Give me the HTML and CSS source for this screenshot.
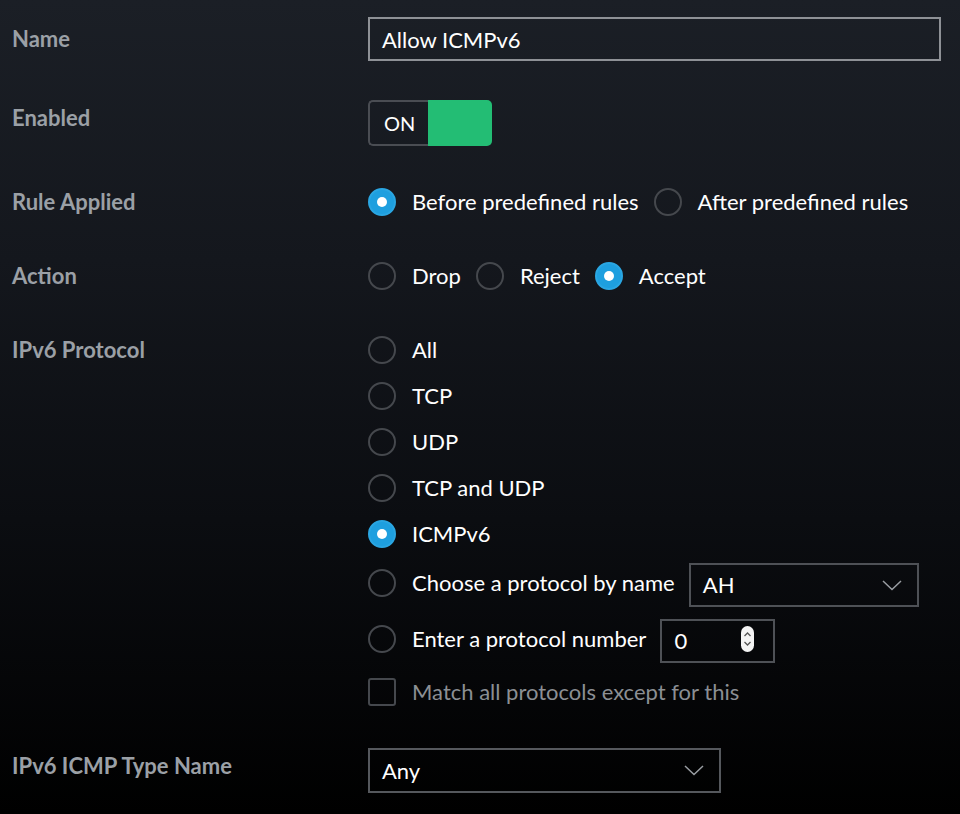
FILE: index.html
```html
<!DOCTYPE html>
<html lang="en">
<head>
<meta charset="utf-8">
<title>Firewall rule</title>
<link rel="stylesheet" href="styles.css">
</head>
<body>
<form class="form">
  <div class="row">
    <div class="label">Name</div>
    <div class="text-input name-input">Allow ICMPv6</div>
  </div>

  <div class="row row--top row--enabled">
    <div class="label label--enabled">Enabled</div>
    <div class="toggle">
      <span class="toggle-on">ON</span>
      <span class="toggle-knob"></span>
    </div>
  </div>

  <div class="row row--rule">
    <div class="label">Rule Applied</div>
    <div class="inline-options">
      <span class="opt"><span class="radio radio--checked"></span>Before predefined rules</span>
      <span class="opt"><span class="radio"></span>After predefined rules</span>
    </div>
  </div>

  <div class="row row--action">
    <div class="label">Action</div>
    <div class="inline-options">
      <span class="opt"><span class="radio"></span>Drop</span>
      <span class="opt"><span class="radio"></span>Reject</span>
      <span class="opt"><span class="radio radio--checked"></span>Accept</span>
    </div>
  </div>

  <div class="row row--top row--protocol">
    <div class="label label--stack">IPv6 Protocol</div>
    <div class="stack">
      <span class="opt"><span class="radio"></span>All</span>
      <span class="opt opt--s"><span class="radio"></span>TCP</span>
      <span class="opt opt--s"><span class="radio"></span>UDP</span>
      <span class="opt opt--s"><span class="radio"></span>TCP and UDP</span>
      <span class="opt opt--s"><span class="radio radio--checked"></span>ICMPv6</span>
      <div class="opt opt--choose">
        <span class="radio"></span><span class="opt-text">Choose a protocol by name</span>
        <div class="select select--proto">
          <span>AH</span>
          <svg class="chevron" width="20" height="11" viewBox="0 0 20 11"><polyline points="1,1 10,9.5 19,1" fill="none" stroke="#9a9ea3" stroke-width="1.5"/></svg>
        </div>
      </div>
      <div class="opt opt--number">
        <span class="radio"></span><span class="opt-text">Enter a protocol number</span>
        <div class="number-input">
          <span>0</span>
          <span class="spinner">
            <svg width="13" height="26" viewBox="0 0 13 26"><rect x="0" y="0" width="13" height="26" rx="6.5" fill="#f4f4f4"/><polyline points="3.5,10 6.5,7 9.5,10" fill="none" stroke="#555" stroke-width="1.3"/><polyline points="3.5,16 6.5,19 9.5,16" fill="none" stroke="#555" stroke-width="1.3"/></svg>
          </span>
        </div>
      </div>
      <div class="opt opt--check">
        <span class="checkbox"></span><span class="muted">Match all protocols except for this</span>
      </div>
    </div>
  </div>

  <div class="row row--top row--icmp">
    <div class="label label--icmp">IPv6 ICMP Type Name</div>
    <div class="select select--icmp">
      <span>Any</span>
      <svg class="chevron" width="20" height="11" viewBox="0 0 20 11"><polyline points="1,1 10,9.5 19,1" fill="none" stroke="#9a9ea3" stroke-width="1.5"/></svg>
    </div>
  </div>
</form>
</body>
</html>
```

FILE: styles.css
```css
html, body {
  margin: 0;
  padding: 0;
}

body {
  width: 960px;
  height: 814px;
  overflow: hidden;
  background: linear-gradient(180deg, #1b1f26 0px, #14171d 260px, #0b0d11 520px, #000000 814px);
  font-family: Lato, "Open Sans", sans-serif;
  font-size: 22px;
  color: #ffffff;
}

.form {
  display: flex;
  flex-direction: column;
  padding: 17px 0 0 12px;
}

.row {
  display: flex;
  align-items: center;
}

.row--top {
  align-items: flex-start;
}

.row--enabled { margin-top: 39px; }
.row--rule { margin-top: 42px; }
.row--action { margin-top: 46px; }
.row--protocol { margin-top: 46px; }
.row--icmp { margin-top: 42px; }

.label {
  width: 356px;
  flex: none;
  font-weight: 700;
  color: #9ba0a6;
  line-height: 28px;
}

.label--enabled { margin-top: 4px; }
.label--icmp { margin-top: 4px; }

.text-input {
  box-sizing: border-box;
  height: 44px;
  border: 2px solid #8e9196;
  display: flex;
  align-items: center;
  padding-left: 12px;
}

.name-input {
  width: 573px;
}

.toggle {
  display: flex;
  width: 124px;
  height: 46px;
}

.toggle-on {
  box-sizing: border-box;
  width: 60px;
  height: 46px;
  border: 2px solid #4a4d53;
  border-right: none;
  border-radius: 5px 0 0 5px;
  display: flex;
  align-items: center;
  padding-left: 14px;
  font-size: 20px;
}

.toggle-knob {
  flex: 1;
  background: #23bd74;
  border-radius: 0 5px 5px 0;
}

.inline-options {
  display: flex;
  align-items: center;
}

.opt {
  display: flex;
  align-items: center;
  gap: 16px;
  margin-right: 15px;
  line-height: 28px;
}

.radio {
  box-sizing: border-box;
  width: 28px;
  height: 28px;
  flex: none;
  border-radius: 50%;
  border: 2px solid #45484d;
  position: relative;
}

.radio--checked {
  background: #1e9fdf;
  border-color: #2aa6e2;
}

.radio--checked::after {
  content: "";
  position: absolute;
  left: 50%;
  top: 50%;
  width: 10px;
  height: 10px;
  margin: -5px 0 0 -5px;
  border-radius: 50%;
  background: #ffffff;
}

.stack {
  display: flex;
  flex-direction: column;
  align-items: flex-start;
}

.opt--s { margin-top: 18px; }

.opt--choose {
  margin-top: 15px;
  gap: 0;
}

.opt--number {
  margin-top: 12px;
  gap: 0;
}

.opt--choose .opt-text,
.opt--number .opt-text {
  margin: -4px 14px 0 16px;
}

.opt--choose .radio,
.opt--number .radio {
  margin-top: -4px;
}

.select {
  box-sizing: border-box;
  height: 44px;
  border: 2px solid #4e5156;
  display: flex;
  align-items: center;
  justify-content: space-between;
  padding: 0 15px 0 12px;
}

.select--proto {
  width: 230px;
}

.select--icmp {
  width: 353px;
  height: 45px;
  border-color: #55585d;
}

.chevron {
  display: block;
}

.number-input {
  box-sizing: border-box;
  width: 115px;
  height: 44px;
  border: 2px solid #4e5156;
  display: flex;
  align-items: center;
  justify-content: space-between;
  padding: 0 19px 0 12px;
}

.spinner {
  display: flex;
  margin-top: -4px;
}

.opt--check {
  margin-top: 15px;
}

.checkbox {
  box-sizing: border-box;
  width: 28px;
  height: 28px;
  flex: none;
  border: 2px solid #45484d;
  border-radius: 3px;
}

.muted {
  color: #8b8f94;
}
```
